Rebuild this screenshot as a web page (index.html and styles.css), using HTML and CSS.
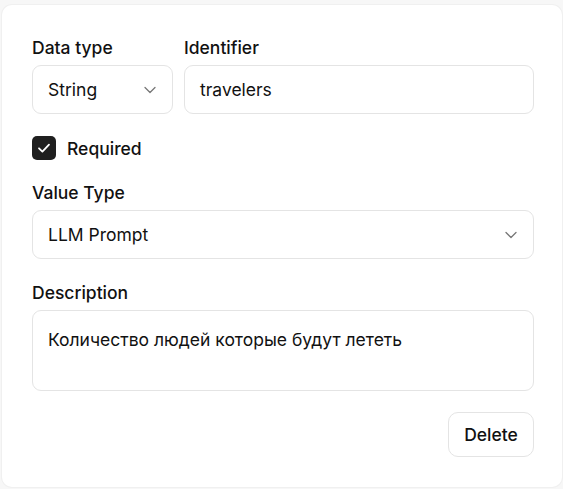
FILE: index.html
```html
<!DOCTYPE html>
<html>
<head>
<meta charset="utf-8">
<link rel="stylesheet" href="styles.css">
</head>
<body>
<div class="card">
  <div class="row">
    <div class="field field-type">
      <div class="label">Data type</div>
      <div class="box select">
        <span>String</span>
        <svg class="chev" width="12" height="8" viewBox="0 0 12 8"><path d="M1 1.5 L6 6.5 L11 1.5" fill="none" stroke="#777" stroke-width="1.3" stroke-linecap="round" stroke-linejoin="round"/></svg>
      </div>
    </div>
    <div class="field field-id">
      <div class="label">Identifier</div>
      <div class="box">travelers</div>
    </div>
  </div>
  <div class="check-row">
    <span class="checkbox">
      <svg width="16" height="16" viewBox="0 0 16 16"><path d="M3 8.3 L6.4 11.6 L13 4.6" fill="none" stroke="#fff" stroke-width="1.8" stroke-linecap="round" stroke-linejoin="round"/></svg>
    </span>
    <span class="check-label">Required</span>
  </div>
  <div class="field">
    <div class="label">Value Type</div>
    <div class="box select">
      <span>LLM Prompt</span>
      <svg class="chev" width="12" height="8" viewBox="0 0 12 8"><path d="M1 1.5 L6 6.5 L11 1.5" fill="none" stroke="#777" stroke-width="1.3" stroke-linecap="round" stroke-linejoin="round"/></svg>
    </div>
  </div>
  <div class="field field-desc">
    <div class="label">Description</div>
    <div class="box textarea">Количество людей которые будут лететь</div>
  </div>
  <div class="actions">
    <button class="btn">Delete</button>
  </div>
</div>
</body>
</html>
```
FILE: styles.css
```css
* { box-sizing: border-box; }
html, body { margin: 0; padding: 0; }
body {
  background: #f7f7f7;
  font-family: Inter, "Noto Sans", sans-serif;
  color: #111;
  width: 563px;
  height: 489px;
  padding: 5px 1px 2px 2px;
}
.card {
  background: #fff;
  border-radius: 10px;
  width: 560px;
  height: 482px;
  padding: 31px 28px 30px 30px;
  display: flex;
  flex-direction: column;
  gap: 21px;
  box-shadow: 0 0 0 1px #f0f0f0;
}
.row {
  display: flex;
  gap: 11px;
}
.field { display: flex; flex-direction: column; }
.field-type { width: 141px; }
.field-id { flex: 1; }
.field-desc { margin-top: 1px; }
.label {
  font-size: 17.5px;
  font-weight: 500;
  line-height: 24px;
  margin-bottom: 5px;
  color: #111;
}
.box {
  height: 49px;
  border: 1px solid #e4e4e4;
  border-radius: 9px;
  padding: 0 15px;
  display: flex;
  align-items: center;
  font-size: 17.5px;
  color: #111;
}
.select { justify-content: space-between; padding-right: 16px; }
.chev { display: block; }
.textarea {
  height: 81px;
  align-items: flex-start;
  padding-top: 16px;
  line-height: 26px;
}
.check-row {
  display: flex;
  align-items: center;
  gap: 11px;
  height: 24px;
  margin-top: 1px;
}
.checkbox {
  width: 24px;
  height: 24px;
  background: #1f1f1f;
  border-radius: 5px;
  display: flex;
  align-items: center;
  justify-content: center;
}
.checkbox svg { display: block; }
.check-label {
  font-size: 17.5px;
  font-weight: 500;
  color: #111;
}
.actions {
  display: flex;
  justify-content: flex-end;
}
.btn {
  font-family: Inter, "Noto Sans", sans-serif;
  font-size: 17.5px;
  font-weight: 500;
  color: #111;
  background: #fff;
  border: 1px solid #e4e4e4;
  border-radius: 10px;
  height: 45px;
  width: 86px;
  padding: 0;
}
```
